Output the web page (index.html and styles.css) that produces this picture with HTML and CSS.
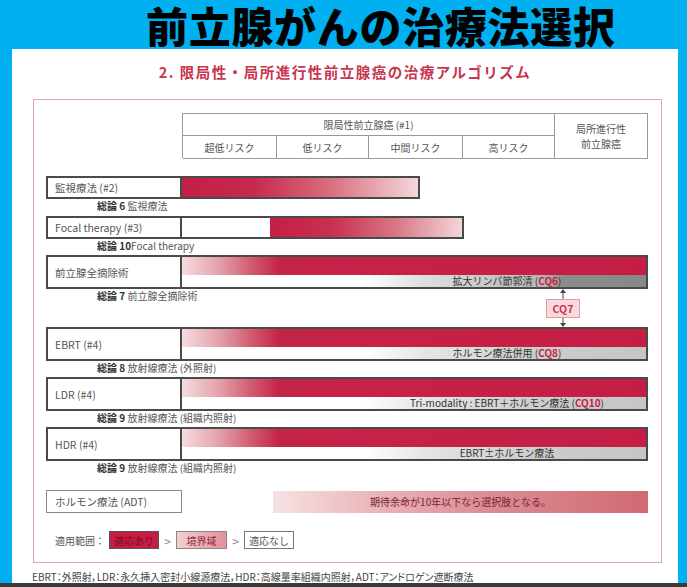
FILE: index.html
```html
<!DOCTYPE html>
<html lang="ja">
<head>
<meta charset="utf-8">
<title>前立腺がんの治療法選択</title>
<link rel="stylesheet" href="styles.css">
</head>
<body>
<div class="screen">
  <h1 class="title">前立腺がんの治療法選択</h1>
  <div class="panel">
    <h2 class="subtitle">2. 限局性・局所進行性前立腺癌の治療アルゴリズム</h2>
    <div class="frame">
      <div class="head">
        <div class="hcell hspan">限局性前立腺癌 (#1)</div>
        <div class="hcell hside">局所進行性<br>前立腺癌</div>
        <div class="hcell">超低リスク</div>
        <div class="hcell">低リスク</div>
        <div class="hcell">中間リスク</div>
        <div class="hcell">高リスク</div>
      </div>

      <div class="row r-short first">
        <div class="label">監視療法 (#2)</div>
        <div class="bar bar-watch"></div>
      </div>
      <div class="caption"><b>総論 6</b> 監視療法</div>

      <div class="row r-short gap3">
        <div class="label">Focal therapy (#3)</div>
        <div class="bar bar-focal"></div>
      </div>
      <div class="caption"><b>総論 10</b>Focal therapy</div>

      <div class="row r-tall gap2">
        <div class="label">前立腺全摘除術</div>
        <div class="bar bar-full">
          <div class="red"></div>
          <div class="stripe stripe-dark"><span>拡大リンパ節郭清 (<em>CQ6</em>)</span></div>
        </div>
      </div>
      <div class="caption"><b>総論 7</b> 前立腺全摘除術</div>

      <div class="row r-tall gap24">
        <div class="label">EBRT (#4)</div>
        <div class="bar bar-full">
          <div class="red"></div>
          <div class="stripe"><span>ホルモン療法併用 (<em>CQ8</em>)</span></div>
        </div>
      </div>
      <div class="caption"><b>総論 8</b> 放射線療法 (外照射)</div>

      <div class="row r-tall gap2">
        <div class="label">LDR (#4)</div>
        <div class="bar bar-full">
          <div class="red"></div>
          <div class="stripe"><span>Tri-modality : EBRT＋ホルモン療法 (<em>CQ10</em>)</span></div>
        </div>
      </div>
      <div class="caption"><b>総論 9</b> 放射線療法 (組織内照射)</div>

      <div class="row r-tall gap2">
        <div class="label">HDR (#4)</div>
        <div class="bar bar-full">
          <div class="red"></div>
          <div class="stripe"><span>EBRT±ホルモン療法</span></div>
        </div>
      </div>
      <div class="caption"><b>総論 9</b> 放射線療法 (組織内照射)</div>

      <div class="row-adt">
        <div class="label label-thin">ホルモン療法 (ADT)</div>
        <div class="adt-bar">期待余命が10年以下なら選択肢となる。</div>
      </div>

      <div class="legend">
        <span class="legend-title">適用範囲：</span>
        <span class="chip chip-yes">適応あり</span>
        <span class="gt">&gt;</span>
        <span class="chip chip-mid">境界域</span>
        <span class="gt">&gt;</span>
        <span class="chip chip-no">適応なし</span>
      </div>

      <div class="cq7">
        <svg class="arrow" width="8" height="10" viewBox="0 0 8 10"><line x1="4" y1="3" x2="4" y2="10" stroke="#444" stroke-width="1"/><polygon points="1,4 7,4 4,0" fill="#444"/></svg>
        <div class="cq7-box">CQ7</div>
        <svg class="arrow" width="8" height="9" viewBox="0 0 8 9"><line x1="4" y1="0" x2="4" y2="6" stroke="#444" stroke-width="1"/><polygon points="1,5 7,5 4,9" fill="#444"/></svg>
      </div>
    </div>
    <p class="foot">EBRT：外照射，LDR：永久挿入密封小線源療法，HDR：高線量率組織内照射，ADT：アンドロゲン遮断療法</p>
  </div>
  <div class="bottom"></div>
</div>
</body>
</html>
```

FILE: styles.css
```css
* { box-sizing: border-box; }
html, body {
  margin: 0;
  padding: 0;
}
body {
  width: 687px;
  height: 587px;
  background: #00b0f0;
  font-family: "Noto Sans CJK JP", "Noto Sans", sans-serif;
}
.screen {
  width: 687px;
  height: 587px;
  display: flex;
  flex-direction: column;
}
.title {
  margin: 0;
  height: 49px;
  line-height: 49px;
  padding-left: 146px;
  font-size: 42px;
  font-weight: 900;
  color: #000;
  letter-spacing: 0.7px;
  white-space: nowrap;
}
.panel {
  margin-left: 12px;
  width: 666px;
  height: 534px;
  background: #fff;
  padding-top: 14px;
}
.subtitle {
  margin: 0;
  height: 18px;
  line-height: 18px;
  text-align: center;
  font-size: 14.5px;
  font-weight: 700;
  color: #c8354f;
  letter-spacing: 1.5px;
}
.frame {
  position: relative;
  margin: 18px 0 0 21px;
  width: 629px;
  height: 464px;
  border: 1px solid #e3a3b0;
  padding: 13px 0 0 12px;
  display: flex;
  flex-direction: column;
}

/* header table */
.head {
  margin-left: 136px;
  width: 466px;
  height: 45px;
  display: grid;
  grid-template-columns: 94px 92px 94px 92px 93px;
  grid-template-rows: 22px 23px;
  border-top: 1px solid #999;
  border-left: 1px solid #999;
}
.hcell {
  border-right: 1px solid #999;
  border-bottom: 1px solid #999;
  display: flex;
  align-items: center;
  justify-content: center;
  font-size: 10px;
  color: #555;
  text-align: center;
  line-height: 15px;
}
.hspan { grid-column: 1 / 5; }
.hside { grid-column: 5; grid-row: 1 / 3; }

/* rows */
.row {
  display: flex;
  flex: none;
}
.r-short { height: 23px; }
.r-tall { height: 34px; }
.first { margin-top: 18px; }
.gap2 { margin-top: 2px; }
.gap3 { margin-top: 3px; }
.gap24 { margin-top: 24px; }

.label {
  width: 136px;
  height: 100%;
  border: 2px solid #4a4a4a;
  display: flex;
  align-items: center;
  padding-left: 7px;
  font-size: 10.5px;
  color: #555;
  background: #fff;
}
.bar {
  height: 100%;
  border: 2px solid #4a4a4a;
  border-left: none;
}
.bar-watch {
  width: 238px;
  background: linear-gradient(to right, #c41e45 0%, #c62a4d 30%, #d76779 60%, #ebb6bd 88%, #f3d8db 100%);
}
.bar-focal {
  width: 282px;
  background: linear-gradient(to right, #fff 0, #fff 88px, #c41e45 88px, #c9304f 150px, #d97885 215px, #efc8cd 270px, #f3d6d9 100%);
}
.bar-full {
  width: 466px;
  display: flex;
  flex-direction: column;
}
.red {
  flex: 1;
  background: linear-gradient(to right, #f5dde0 0%, #e3a1ab 8%, #d15a6e 15%, #c52449 21%, #c41e45 100%);
}
.stripe {
  height: 12px;
  background: linear-gradient(to right, #fff 0%, #fff 39%, #e6e6e6 52%, #cdcdcd 75%, #c6c6c6 100%);
  padding-left: 186px;
  display: flex;
  align-items: center;
  font-size: 10px;
  line-height: 12px;
  color: #333;
}
.stripe-dark {
  background: linear-gradient(to right, #fff 0%, #fff 39%, #dedede 52%, #b5b5b5 78%, #8c8c8c 82%, #888 100%);
}
.stripe span {
  width: 280px;
  text-align: center;
  white-space: nowrap;
}
.stripe em {
  font-style: normal;
  font-weight: 700;
  color: #c41e45;
}
.caption {
  height: 14px;
  line-height: 14px;
  padding-left: 51px;
  font-size: 10px;
  color: #555;
  white-space: nowrap;
}
.caption b {
  color: #333;
  font-weight: 700;
}

/* ADT row */
.row-adt {
  margin-top: 15px;
  height: 23px;
  display: flex;
  align-items: center;
}
.label-thin {
  border: 1px solid #888;
  padding-left: 8px;
}
.adt-bar {
  margin-left: 91px;
  width: 375px;
  height: 22px;
  background: linear-gradient(to right, #f7e2e3 0%, #eab9bd 25%, #dc8f96 55%, #d06a73 100%);
  display: flex;
  align-items: center;
  justify-content: center;
  font-size: 10px;
  color: #7a2232;
}

/* legend */
.legend {
  margin-top: 18px;
  height: 18px;
  display: flex;
  align-items: center;
  padding-left: 9px;
  font-size: 10px;
  color: #555;
}
.legend-title { margin-right: 4px; }
.chip {
  width: 50px;
  height: 18px;
  display: flex;
  align-items: center;
  justify-content: center;
  font-size: 10px;
}
.chip-yes {
  background: #c41e45;
  border: 1px solid #555;
  color: #7d0c27;
}
.chip-mid {
  width: 51px;
  background: linear-gradient(to right, #f3cfd3, #e48f9b);
  border: 1px solid #888;
  color: #8a2a3a;
}
.chip-no {
  background: #fff;
  border: 1px solid #777;
  color: #555;
}
.gt {
  width: 17px;
  text-align: center;
  font-size: 12px;
  color: #888;
}

/* CQ7 overlay */
.cq7 {
  position: absolute;
  left: 512px;
  top: 189px;
  width: 34px;
  display: flex;
  flex-direction: column;
  align-items: center;
}
.arrow { display: block; }
.cq7-box {
  width: 34px;
  height: 19px;
  background: #f8d9de;
  border: 1px solid #e49aa6;
  display: flex;
  align-items: center;
  justify-content: center;
  font-size: 10.5px;
  font-weight: 700;
  color: #c8354f;
}

.foot {
  margin: 8px 0 0 20px;
  height: 12px;
  line-height: 12px;
  font-size: 10px;
  color: #444;
  white-space: nowrap;
  font-feature-settings: "palt";
}
.bottom {
  height: 4px;
  background: #3a3a3a;
}
```
